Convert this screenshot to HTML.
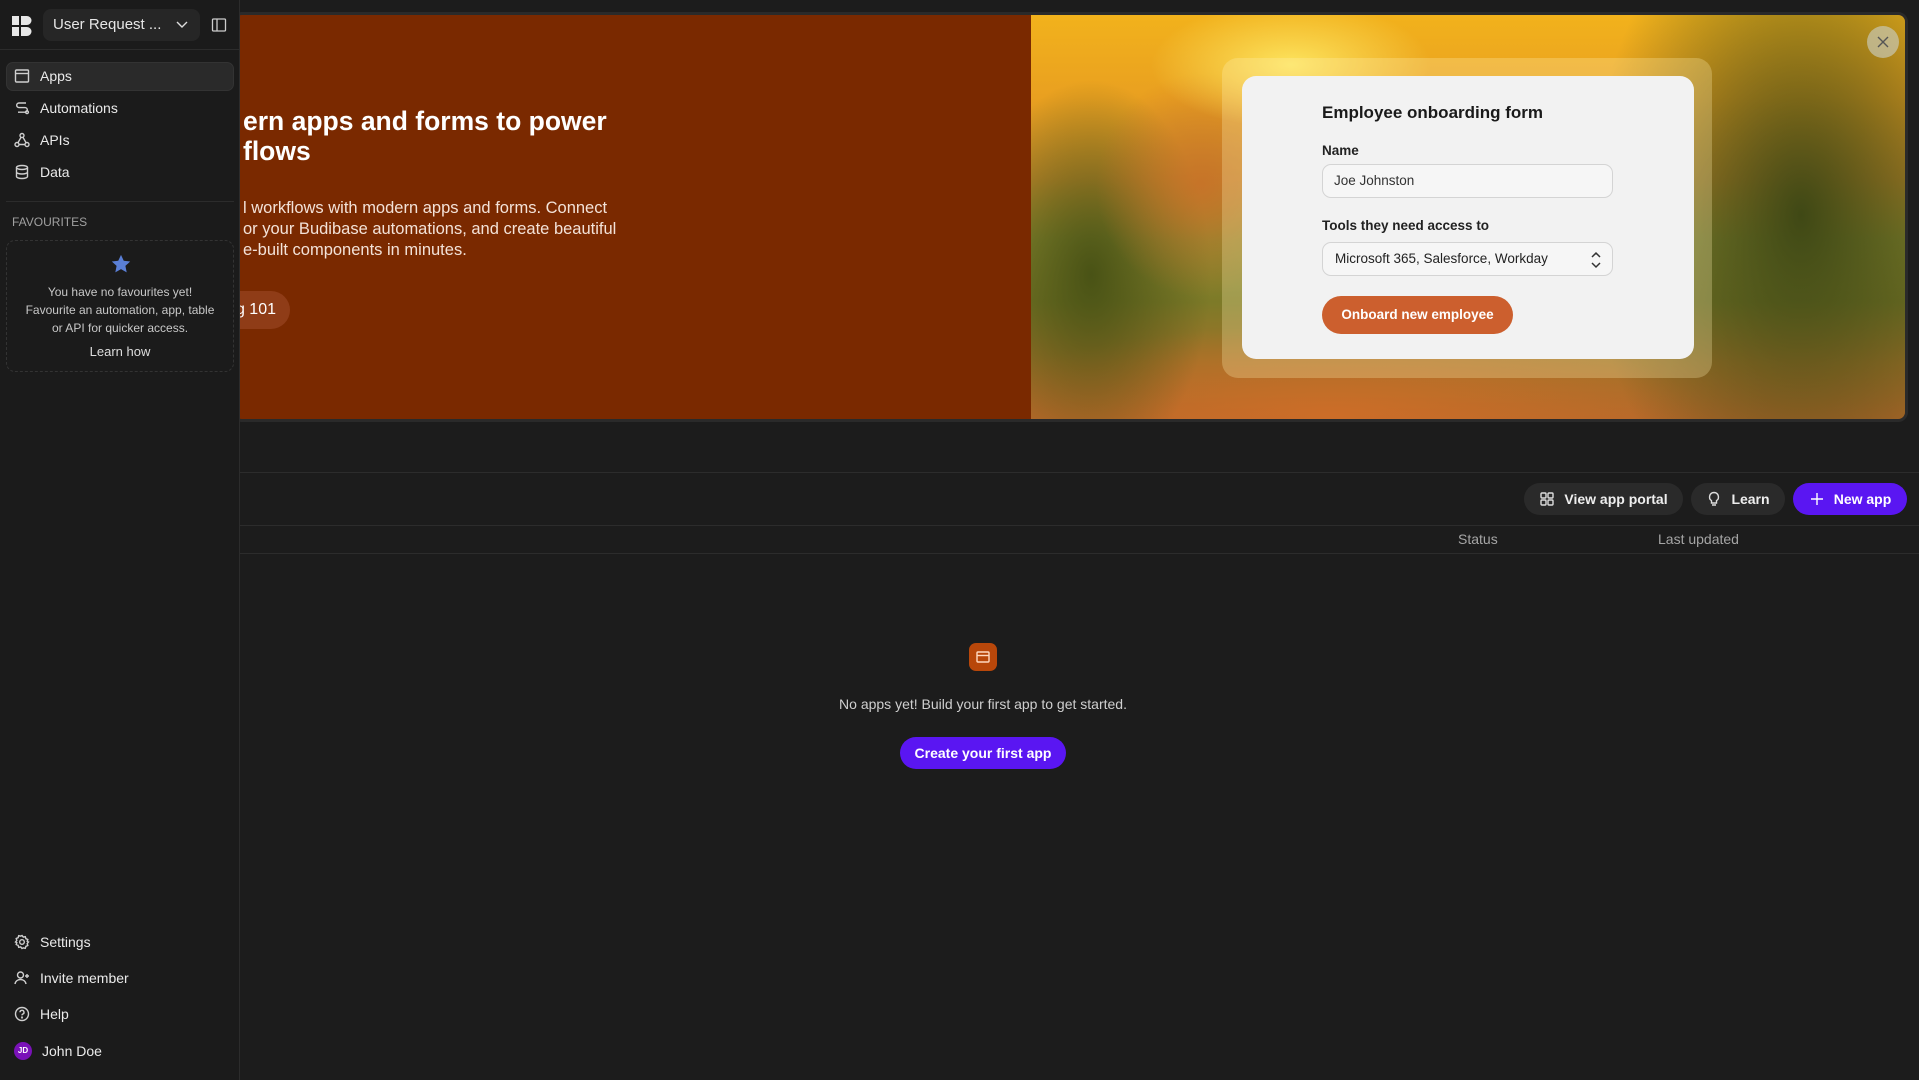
<!DOCTYPE html>
<html><head><meta charset="utf-8">
<style>
*{box-sizing:border-box;margin:0;padding:0}
body{width:1919px;height:1080px;overflow:hidden;background:#1c1c1c;font-family:"Liberation Sans",sans-serif;color:#e6e6e6;position:relative}
.abs{position:absolute}
.side{left:0;top:0;width:240px;height:1080px;background:#1b1b1b;border-right:1px solid #2c2c2c;z-index:5}
.nav{position:absolute;left:14px;font-size:14px;color:#eaeaea;display:flex;align-items:center;gap:10px;white-space:nowrap}
.nav svg{width:16px;height:16px;stroke:#cfcfcf;fill:none;stroke-width:1.4}
.btn{position:absolute;top:483px;height:32px;border-radius:16px;background:#2a2a2a;display:flex;align-items:center;justify-content:center;gap:9px;font-size:14px;font-weight:bold;color:#eee;white-space:nowrap}
.btn svg{width:16px;height:16px;stroke:#ddd;fill:none;stroke-width:1.4}
</style></head><body>

<!-- banner -->
<div class="abs" style="left:232px;top:12px;width:1676px;height:410px;border:3px solid #2a2a2a;border-radius:10px;overflow:hidden;background:#7a2900">
  <div class="abs" style="left:8px;top:91px;font-size:26.5px;font-weight:bold;color:#fff;line-height:30px;white-space:nowrap">ern apps and forms to power<br>flows</div>
  <div class="abs" style="left:8px;top:183px;font-size:16.5px;color:#f3e2d8;line-height:21px;white-space:nowrap">l workflows with modern apps and forms. Connect<br>or your Budibase automations, and create beautiful<br>e-built components in minutes.</div>
  <div class="abs" style="left:-60px;top:276px;width:115px;height:38px;border-radius:19px;background:#8f3c17;color:#fff;font-size:16px;line-height:38px;text-align:right;padding-right:14px">g 101</div>
  <div class="abs" style="left:796px;top:0;width:880px;height:410px;background:
    radial-gradient(ellipse 200px 90px at 260px 50px,rgba(255,235,100,.9),rgba(255,200,40,0) 70%),
    radial-gradient(ellipse 150px 160px at 170px 170px,rgba(200,110,40,.8),rgba(0,0,0,0) 70%),
    radial-gradient(ellipse 270px 430px at 770px 200px,rgba(60,70,20,.97),rgba(60,70,20,0) 78%),
    radial-gradient(ellipse 160px 260px at 60px 260px,rgba(70,80,20,.95),rgba(0,0,0,0) 75%),
    radial-gradient(ellipse 500px 120px at 300px 400px,rgba(210,110,40,.8),rgba(0,0,0,0) 75%),
    linear-gradient(180deg,#f2b21c 0%,#e9a020 20%,#c48a2a 40%,#8c8a30 55%,#7d7a28 70%,#a27228 85%,#b8682a 100%)"></div>
  <div class="abs" style="left:987px;top:43px;width:490px;height:320px;border-radius:16px;background:rgba(255,240,180,.28)"></div>
  <div class="abs" style="left:1007px;top:61px;width:452px;height:283px;border-radius:14px;background:#f2f2f2;color:#1a1a1a">
    <div class="abs" style="left:80px;top:27px;font-size:17px;font-weight:bold;white-space:nowrap">Employee onboarding form</div>
    <div class="abs" style="left:80px;top:67px;font-size:13.5px;font-weight:bold;color:#222">Name</div>
    <div class="abs" style="left:80px;top:88px;width:291px;height:34px;border:1px solid #d4d4d4;border-radius:9px;background:#f6f6f6;font-size:13.5px;line-height:32px;padding-left:11px;color:#333">Joe Johnston</div>
    <div class="abs" style="left:80px;top:142px;font-size:13.5px;font-weight:bold;color:#222;white-space:nowrap">Tools they need access to</div>
    <div class="abs" style="left:80px;top:166px;width:291px;height:34px;border:1px solid #d4d4d4;border-radius:9px;background:#f6f6f6;font-size:13.5px;line-height:32px;padding-left:12px;color:#222;white-space:nowrap">Microsoft 365, Salesforce, Workday
      <svg class="abs" style="right:10px;top:7px" width="12" height="20" viewBox="0 0 12 20" fill="none" stroke="#333" stroke-width="1.5"><path d="M2 7l4-4 4 4M2 13l4 4 4-4"/></svg></div>
    <div class="abs" style="left:80px;top:220px;width:191px;height:38px;border-radius:19px;background:#cc5f2e;color:#fff;font-size:13.5px;font-weight:bold;line-height:38px;text-align:center;white-space:nowrap">Onboard new employee</div>
  </div>
  <div class="abs" style="left:1632px;top:11px;width:32px;height:32px;border-radius:16px;background:rgba(200,200,180,.7)">
    <svg width="32" height="32" viewBox="0 0 32 32" stroke="#555" stroke-width="1.4"><path d="M11 11l10 10M21 11l-10 10"/></svg></div>
</div>

<!-- toolbar -->
<div class="abs" style="left:240px;top:472px;width:1679px;height:1px;background:#2c2c2c"></div>
<div class="btn" style="left:1524px;width:159px"><svg viewBox="0 0 16 16"><rect x="2" y="2" width="5" height="5" rx="1"/><rect x="9" y="2" width="5" height="5" rx="1"/><rect x="2" y="9" width="5" height="5" rx="1"/><rect x="9" y="9" width="5" height="5" rx="1"/></svg>View app portal</div>
<div class="btn" style="left:1691px;width:94px"><svg viewBox="0 0 16 16"><path d="M8 1.5a4.5 4.5 0 0 0-2.5 8.2V12h5V9.7A4.5 4.5 0 0 0 8 1.5zM6 14h4"/></svg>Learn</div>
<div class="btn" style="left:1793px;width:114px;background:#5a16f2;color:#fff"><svg viewBox="0 0 16 16" style="stroke:#fff"><path d="M8 2v12M2 8h12"/></svg>New app</div>
<div class="abs" style="left:240px;top:525px;width:1679px;height:1px;background:#2c2c2c"></div>
<div class="abs" style="left:1458px;top:531px;font-size:14px;color:#a5a5a5">Status</div>
<div class="abs" style="left:1658px;top:531px;font-size:14px;color:#a5a5a5">Last updated</div>
<div class="abs" style="left:240px;top:553px;width:1679px;height:1px;background:#2c2c2c"></div>

<!-- empty -->
<div class="abs" style="left:969px;top:643px;width:28px;height:28px;border-radius:7px;background:#b8470a">
  <svg width="28" height="28" viewBox="0 0 28 28" fill="none" stroke="#ffd9c0" stroke-width="1.4"><rect x="8" y="9" width="12" height="10" rx="1"/><path d="M8 12.5h12"/></svg></div>
<div class="abs" style="left:783px;top:696px;width:400px;text-align:center;font-size:14px;color:#cfcfcf">No apps yet! Build your first app to get started.</div>
<div class="abs" style="left:900px;top:737px;width:166px;height:32px;border-radius:16px;background:#5a16f2;color:#fff;font-size:14px;font-weight:bold;line-height:32px;text-align:center">Create your first app</div>

<!-- sidebar -->
<div class="abs side">
  <svg class="abs" style="left:12px;top:16px" width="22" height="20" viewBox="0 0 22 20" fill="#e8e8e8"><path d="M0 0h7v9H0zM0 11h7v9H0zM9 0h6a4.5 4.5 0 0 1 0 9H9zM9 11h6a4.5 4.5 0 0 1 0 9H9z"/></svg>
  <div class="abs" style="left:43px;top:9px;width:157px;height:32px;border-radius:8px;background:#262626;font-size:15px;line-height:32px;padding-left:10px;color:#e6e6e6">User Request ...
    <svg class="abs" style="right:12px;top:11px" width="12" height="10" viewBox="0 0 12 10" fill="none" stroke="#ddd" stroke-width="1.4"><path d="M1 2l5 5 5-5"/></svg></div>
  <svg class="abs" style="left:211px;top:17px" width="16" height="16" viewBox="0 0 16 16" fill="none" stroke="#ccc" stroke-width="1.3"><rect x="1.5" y="2" width="13" height="12" rx="1"/><path d="M6 2v12"/></svg>
  <div class="abs" style="left:0;top:49px;width:240px;height:1px;background:#2c2c2c"></div>
  <div class="abs" style="left:6px;top:62px;width:228px;height:29px;border-radius:7px;background:#2a2a2a;border:1px solid #333"></div>
  <div class="nav" style="top:68px"><svg viewBox="0 0 16 16"><rect x="1.5" y="2" width="13" height="12" rx="1"/><path d="M1.5 5.5h13"/></svg>Apps</div>
  <div class="nav" style="top:100px"><svg viewBox="0 0 16 16"><path d="M12 3H5a2.3 2.3 0 0 0 0 4.6h6a2.3 2.3 0 0 1 0 4.6H4"/><circle cx="13" cy="12.2" r="1.4"/></svg>Automations</div>
  <div class="nav" style="top:132px"><svg viewBox="0 0 16 16"><circle cx="8" cy="3.5" r="2"/><circle cx="3" cy="12.5" r="2"/><circle cx="13" cy="12.5" r="2"/><path d="M7 5.3L4 10.7M9 5.3l3 5.4M5 12.5h6"/></svg>APIs</div>
  <div class="nav" style="top:164px"><svg viewBox="0 0 16 16"><ellipse cx="8" cy="3.5" rx="5.5" ry="2"/><path d="M2.5 3.5v9c0 1.1 2.5 2 5.5 2s5.5-.9 5.5-2v-9M2.5 8c0 1.1 2.5 2 5.5 2s5.5-.9 5.5-2"/></svg>Data</div>
  <div class="abs" style="left:6px;top:201px;width:228px;height:1px;background:#2c2c2c"></div>
  <div class="abs" style="left:12px;top:215px;font-size:12px;color:#a0a0a0">FAVOURITES</div>
  <div class="abs" style="left:6px;top:240px;width:228px;height:132px;border:1px dashed #333;border-radius:9px;text-align:center">
    <svg class="abs" style="left:103px;top:12px" width="22" height="22" viewBox="0 0 24 24" fill="#5a7fd6"><path d="M12 2l3 6.5 7 .8-5.2 4.8 1.4 7L12 17.6 5.8 21.1l1.4-7L2 9.3l7-.8z"/></svg>
    <div class="abs" style="left:0;top:42px;width:226px;font-size:12px;line-height:18px;color:#c8c8c8">You have no favourites yet!<br>Favourite an automation, app, table<br>or API for quicker access.</div>
    <div class="abs" style="left:0;top:103px;width:226px;font-size:13px;color:#ddd">Learn how</div>
  </div>
  <div class="nav" style="top:934px"><svg viewBox="0 0 16 16"><circle cx="8" cy="8" r="2.3"/><path d="M8 1.5l1.3 1.6 2-.4.6 2 1.9.8-.6 1.9L14.5 8l-1.3 1.6.6 1.9-1.9.8-.6 2-2-.4L8 14.5l-1.3-1.6-2 .4-.6-2-1.9-.8.6-1.9L1.5 8l1.3-1.6-.6-1.9 1.9-.8.6-2 2 .4z"/></svg>Settings</div>
  <div class="nav" style="top:970px"><svg viewBox="0 0 16 16"><circle cx="6.5" cy="5" r="3"/><path d="M1 14c.5-3 2.8-4.5 5.5-4.5S11.5 11 12 14M13 4v4M11 6h4"/></svg>Invite member</div>
  <div class="nav" style="top:1006px"><svg viewBox="0 0 16 16"><circle cx="8" cy="8" r="6.5"/><path d="M6 6.3a2 2 0 1 1 2.6 1.9c-.5.2-.6.6-.6 1.2"/><circle cx="8" cy="11.5" r=".4"/></svg>Help</div>
  <div class="nav" style="top:1042px"><span style="width:18px;height:18px;border-radius:9px;background:#7a12b8;font-size:8px;font-weight:bold;line-height:18px;text-align:center;color:#fff">JD</span>John Doe</div>
</div>
</body></html>
